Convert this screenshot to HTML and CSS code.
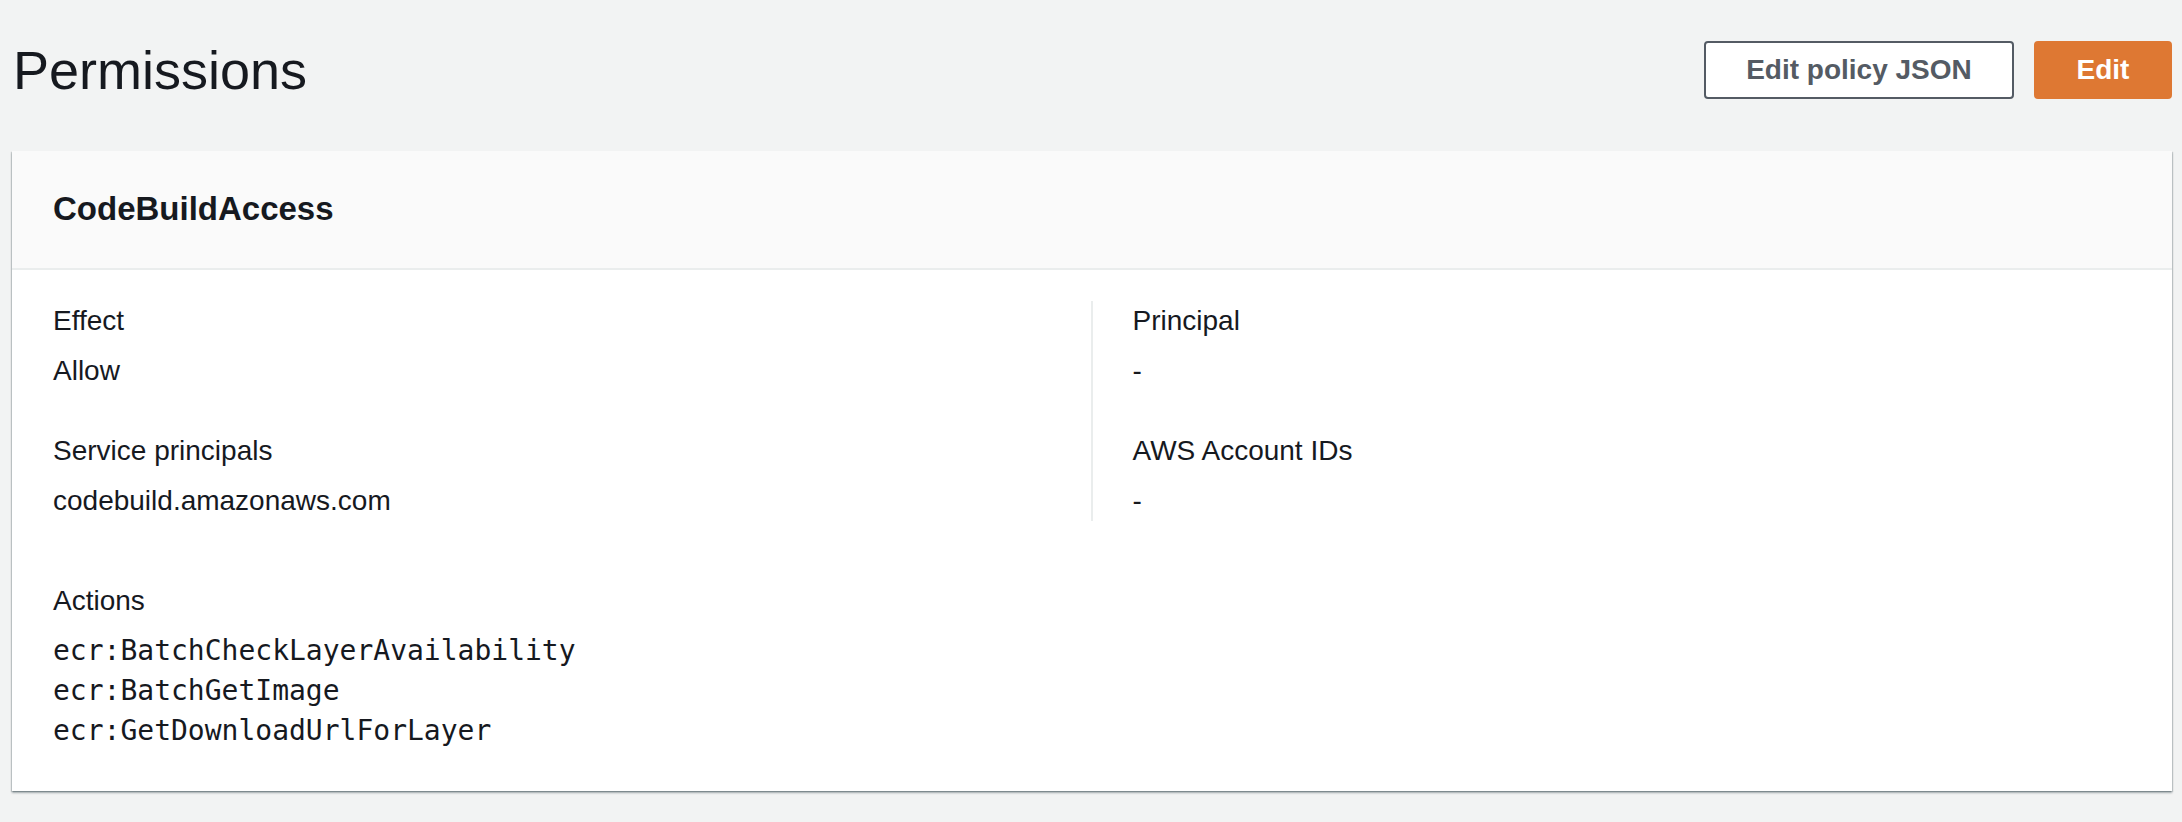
FILE: index.html
```html
<!DOCTYPE html>
<html lang="en">
<head>
<meta charset="utf-8">
<title>Permissions</title>
<link rel="stylesheet" href="styles.css">
</head>
<body>
<main class="page">
  <header class="page-header">
    <h1 class="page-title">Permissions</h1>
    <div class="actions">
      <button class="btn btn-normal" type="button">Edit policy JSON</button>
      <button class="btn btn-primary" type="button">Edit</button>
    </div>
  </header>
  <section class="card">
    <div class="card-header">
      <h2 class="card-title">CodeBuildAccess</h2>
    </div>
    <div class="card-body">
      <div class="columns">
        <div class="column">
          <div class="field">
            <div class="label">Effect</div>
            <div class="value">Allow</div>
          </div>
          <div class="field">
            <div class="label">Service principals</div>
            <div class="value">codebuild.amazonaws.com</div>
          </div>
        </div>
        <div class="column column-divided">
          <div class="field">
            <div class="label">Principal</div>
            <div class="value">-</div>
          </div>
          <div class="field">
            <div class="label">AWS Account IDs</div>
            <div class="value">-</div>
          </div>
        </div>
      </div>
      <div class="field field-actions">
        <div class="label">Actions</div>
        <div class="value mono-list">
          <div>ecr:BatchCheckLayerAvailability</div>
          <div>ecr:BatchGetImage</div>
          <div>ecr:GetDownloadUrlForLayer</div>
        </div>
      </div>
    </div>
  </section>
</main>
</body>
</html>
```

FILE: styles.css
```css
* {
  box-sizing: border-box;
}

html, body {
  margin: 0;
  padding: 0;
}

body {
  background: #f2f3f3;
  color: #16191f;
  font-family: "Liberation Sans", Arial, sans-serif;
  font-size: 28px;
  line-height: 40px;
}

.page {
  padding: 0 10px 32px 12px;
}

.page-header {
  display: flex;
  align-items: center;
  justify-content: space-between;
  padding-top: 41px;
  margin-bottom: 52px;
}

.page-title {
  margin: 0;
  font-size: 54px;
  line-height: 58px;
  font-weight: 400;
  color: #16191f;
  padding-left: 1px;
}

.actions {
  display: flex;
  gap: 20px;
}

.btn {
  height: 58px;
  border-radius: 4px;
  font-family: "Liberation Sans", Arial, sans-serif;
  font-size: 28px;
  font-weight: 700;
  line-height: 1;
  cursor: pointer;
}

.btn-normal {
  width: 310px;
  background: #ffffff;
  border: 2px solid #545b64;
  color: #545b64;
}

.btn-primary {
  width: 138px;
  background: #de7833;
  border: 2px solid #de7833;
  color: #ffffff;
}

.card {
  background: #ffffff;
  box-shadow: 0 2px 2px 0 rgba(0, 28, 36, 0.3), 1px 1px 1px 0 rgba(0, 28, 36, 0.15), -1px 1px 1px 0 rgba(0, 28, 36, 0.15);
}

.card-header {
  height: 119px;
  display: flex;
  align-items: center;
  padding: 0 40px 1px 41px;
  background: #fafafa;
  border-bottom: 2px solid #eaeded;
}

.card-title {
  margin: 0;
  font-size: 33px;
  line-height: 40px;
  font-weight: 700;
  color: #16191f;
}

.card-body {
  padding: 31px 40px 40px 41px;
}

.columns {
  display: grid;
  grid-template-columns: calc(50% - 2px) 1fr;
}

.column {
  display: flex;
  flex-direction: column;
  gap: 40px;
}

.column-divided {
  border-left: 2px solid #eaeded;
  padding-left: 40px;
}

.label {
  line-height: 40px;
}

.value {
  margin-top: 10px;
  line-height: 40px;
}

.field-actions {
  margin-top: 60px;
}

.mono-list {
  font-family: "DejaVu Sans Mono", "Liberation Mono", monospace;
  font-size: 28px;
  line-height: 40px;
  margin-top: 10px;
}
```
